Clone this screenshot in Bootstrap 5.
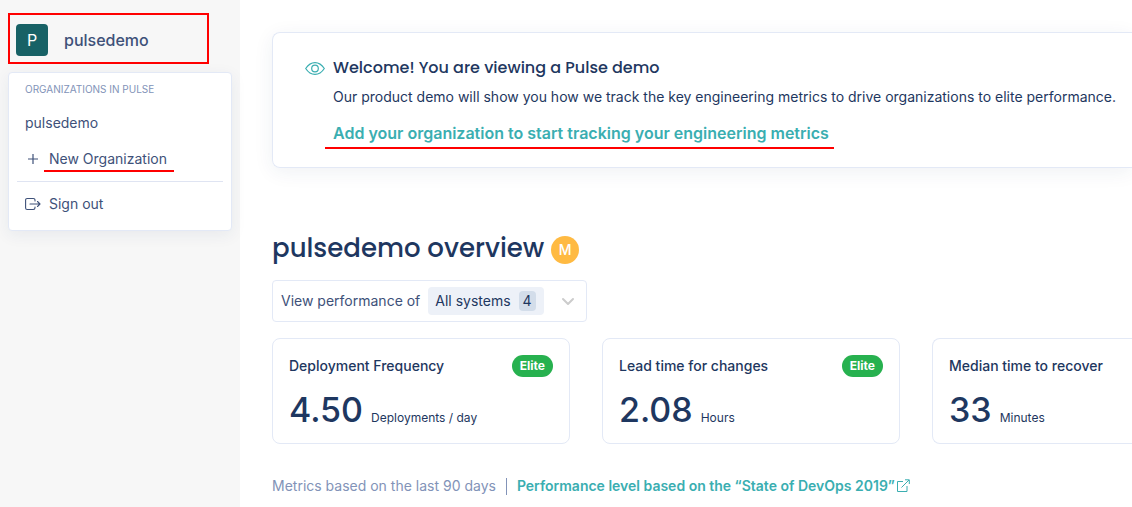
<!DOCTYPE html>
<html lang="en">
<head>
<meta charset="utf-8">
<meta name="viewport" content="width=device-width, initial-scale=1">
<title>Pulse – pulsedemo overview</title>
<link href="https://cdn.jsdelivr.net/npm/bootstrap@5.3.0/dist/css/bootstrap.min.css" rel="stylesheet">
<style>
:root { --navy: #1e3760; --slate: #3e5179; --muted: #8293b8; --teal: #3aaeb1; --line: #e3e9f6; --mark: #f00; }
body { font-family: Inter, "Liberation Sans", sans-serif; font-size: 14px; line-height: 20px; color: var(--navy); background: #fff; }
.sidebar { width: 240px; background: #f7f7f7; padding: 13px 8px 0; }
.org-button { width: 201px; height: 51px; border: 2px solid var(--mark); border-radius: 0; background: none; padding: 2px 6px 0; gap: 16px; font-size: 16px; color: var(--slate); font-weight: 500; }
.org-logo { width: 32px; height: 32px; border-radius: 4px; background: #186266; color: #fff; font-weight: 400; }
.org-menu { margin-top: 8px; padding: 8px 8px 16px; border: 1px solid var(--line); border-radius: 4px; background: #fff; box-shadow: 0 4px 16px rgba(30,55,96,.07); }
.menu-title { font-size: 10px; line-height: 16px; color: var(--muted); padding: 0 8px; margin: 0 0 8px; font-weight: 400; }
.menu-link { color: var(--slate); text-decoration: none; padding: 8px; gap: 8px; }
.menu-rule { border: 0; border-top: 1px solid #dfe4f2; opacity: 1; margin: 4px 0; }
.menu-link:last-child { padding-bottom: 0; }
.marked { position: relative; }
.marked::after { content: ""; position: absolute; height: 2px; background: var(--mark); left: -5px; right: -7px; bottom: -3px; }
.marked-wide::after { left: -8px; right: -5px; bottom: -6px; }
.content { padding: 32px 0 0 32px; min-width: 0; }
.welcome { border: 1px solid var(--line); border-right: 0; border-radius: 8px 0 0 8px; padding: 24px 0 23px 32px; gap: 8px; box-shadow: 0 4px 20px rgba(30,55,96,.07); }
.welcome h2 { font-family: Poppins, Inter, sans-serif; font-size: 16px; line-height: 22px; font-weight: 500; margin: 0 0 8px; }
.teal-link { color: var(--teal); text-decoration: none; font-weight: 600; }
.lead-link { font-size: 16px; line-height: 20px; }
.overview { margin-top: 64px; gap: 7px; }
.overview h1 { font-family: Poppins, Inter, sans-serif; font-size: 26px; line-height: 32px; font-weight: 500; margin: 0; }
.level { width: 28px; height: 28px; border-radius: 50%; background: #ffba42; color: #fff; font-weight: 500; margin-top: 4px; }
.filter { width: 315px; height: 42px; border: 1px solid var(--line); border-radius: 4px; background: #fff; color: var(--slate); padding: 0 11px 0 8px; margin-top: 16px; }
.chosen { background: #edf1f8; color: var(--navy); border-radius: 4px; height: 28px; padding: 0 8px 0 7px; gap: 8px; margin-left: 8px; }
.count { background: #d3ddea; border-radius: 4px; width: 17px; }
.metrics { gap: 32px; margin-top: 16px; }
.metric { flex: 0 0 298px; border: 1px solid var(--line); border-radius: 8px; padding: 16px 16px 12px; }
.metric-last { flex: 1 1 0; min-width: 0; border-right: 0; border-radius: 8px 0 0 8px; }
.metric h3 { font-size: 14px; line-height: 22px; font-weight: 500; margin: 0; }
.elite { background: #27b14f; color: #fff; border-radius: 11px; font-size: 12px; line-height: 22px; font-weight: 700; padding: 0 8px; }
.figure-row { gap: 8px; margin-top: 12px; }
.amount { font-size: 34px; line-height: 42px; font-weight: 500; }
.unit { font-size: 12px; }
.foot { margin-top: 32px; color: var(--muted); }
.bar { width: 1px; height: 17px; background: var(--muted); margin: 0 10px; }
.out-icon { margin-left: 2px; }
</style>
</head>
<body>
<div class="d-flex min-vh-100">
  <aside class="sidebar flex-shrink-0">
    <button type="button" class="org-button d-flex align-items-center" aria-expanded="true"><span class="org-logo d-flex align-items-center justify-content-center">P</span><span>pulsedemo</span></button>
    <nav class="org-menu" aria-label="Organizations">
      <h6 class="menu-title">ORGANIZATIONS IN PULSE</h6>
      <a href="#" class="menu-link d-flex">pulsedemo</a>
      <a href="#" class="menu-link d-flex align-items-center">
        <svg width="16" height="16" fill="none" stroke="currentColor" stroke-width="1.2" aria-hidden="true"><path d="M8 3v10M3 8h10"/></svg>
        <span class="marked">New Organization</span></a>
      <hr class="menu-rule">
      <a href="#" class="menu-link d-flex align-items-center">
        <svg width="16" height="16" fill="none" stroke="currentColor" stroke-width="1.1" stroke-linecap="round" stroke-linejoin="round" aria-hidden="true"><path d="M10 5V4.200Q10 2.500 8.300 2.500H2.200Q.6 2.500.6 4.100v7.800Q.6 13.500 2.200 13.500H8.300Q10 13.500 10 11.800V11M5 8h10M12.500 5.500 15 8l-2.500 2.500"/></svg>
        <span>Sign out</span></a>
    </nav>
  </aside>
  <main class="content flex-grow-1">
    <section class="welcome d-flex">
      <svg class="flex-shrink-0" width="20" height="22" fill="none" stroke="#3aaeb1" stroke-width="1.2" aria-hidden="true"><path d="M.7 11.500Q4.500 5.600 10 5.600t9.300 5.900Q15.500 17.400 10 17.400T.7 11.500Z"/><circle cx="10" cy="11.500" r="3.300"/></svg>
      <div>
        <h2>Welcome! You are viewing a Pulse demo</h2>
        <p class="mb-3">Our product demo will show you how we track the key engineering metrics to drive organizations to elite performance.</p>
        <a href="#" class="teal-link lead-link marked marked-wide d-inline-block">Add your organization to start tracking your engineering metrics</a>
      </div>
    </section>
    <div class="overview d-flex align-items-center"><h1>pulsedemo overview</h1><span class="level d-flex align-items-center justify-content-center">M</span></div>
    <button type="button" class="filter d-flex align-items-center">
      <span>View performance of</span>
      <span class="chosen d-flex align-items-center">All systems <span class="count">4</span></span>
      <svg class="ms-auto" width="14" height="14" fill="none" stroke="#ccc" stroke-width="2" stroke-linecap="round" stroke-linejoin="round" aria-hidden="true"><path d="m2 5 5 5 5-5"/></svg>
    </button>
    <section class="metrics d-flex">
      <article class="metric"><div class="d-flex justify-content-between"><h3>Deployment Frequency</h3><span class="elite">Elite</span></div>
        <div class="figure-row d-flex align-items-baseline"><span class="amount">4.50</span><span class="unit">Deployments / day</span></div></article>
      <article class="metric"><div class="d-flex justify-content-between"><h3>Lead time for changes</h3><span class="elite">Elite</span></div>
        <div class="figure-row d-flex align-items-baseline"><span class="amount">2.08</span><span class="unit">Hours</span></div></article>
      <article class="metric metric-last"><h3>Median time to recover</h3>
        <div class="figure-row d-flex align-items-baseline"><span class="amount">33</span><span class="unit">Minutes</span></div></article>
    </section>
    <footer class="foot d-flex align-items-center"><span>Metrics based on the last 90 days</span><span class="bar"></span>
      <a href="#" class="teal-link d-flex align-items-center">Performance level based on the “State of DevOps 2019”<svg class="out-icon" width="13" height="14" fill="none" stroke="currentColor" aria-hidden="true"><path d="M6 2.500H.5v10h9.500V7M4.500 8.500l7.500-7.500M8 .8h4.300v4.200"/></svg></a></footer>
  </main>
</div>
<script src="https://cdn.jsdelivr.net/npm/bootstrap@5.3.0/dist/js/bootstrap.bundle.min.js"></script>
</body>
</html>
